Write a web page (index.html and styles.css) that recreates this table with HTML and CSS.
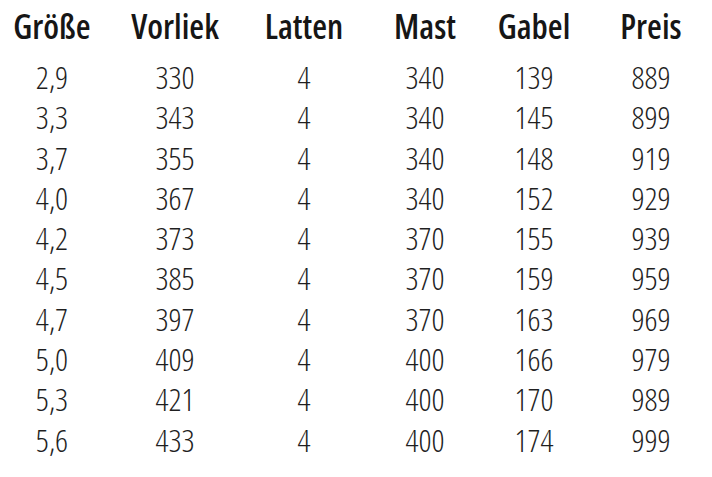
FILE: index.html
```html
<!DOCTYPE html>
<html lang="de">
<head>
<meta charset="utf-8">
<title>Preisliste</title>
<link rel="stylesheet" href="styles.css">
</head>
<body>
<div class="table">
  <div class="row head">
    <span>Größe</span><span>Vorliek</span><span>Latten</span><span>Mast</span><span>Gabel</span><span>Preis</span>
  </div>
  <div class="row"><span>2,9</span><span>330</span><span>4</span><span>340</span><span>139</span><span>889</span></div>
  <div class="row"><span>3,3</span><span>343</span><span>4</span><span>340</span><span>145</span><span>899</span></div>
  <div class="row"><span>3,7</span><span>355</span><span>4</span><span>340</span><span>148</span><span>919</span></div>
  <div class="row"><span>4,0</span><span>367</span><span>4</span><span>340</span><span>152</span><span>929</span></div>
  <div class="row"><span>4,2</span><span>373</span><span>4</span><span>370</span><span>155</span><span>939</span></div>
  <div class="row"><span>4,5</span><span>385</span><span>4</span><span>370</span><span>159</span><span>959</span></div>
  <div class="row"><span>4,7</span><span>397</span><span>4</span><span>370</span><span>163</span><span>969</span></div>
  <div class="row"><span>5,0</span><span>409</span><span>4</span><span>400</span><span>166</span><span>979</span></div>
  <div class="row"><span>5,3</span><span>421</span><span>4</span><span>400</span><span>170</span><span>989</span></div>
  <div class="row"><span>5,6</span><span>433</span><span>4</span><span>400</span><span>174</span><span>999</span></div>
</div>
</body>
</html>
```
FILE: styles.css
```css
html, body {
  margin: 0;
  padding: 0;
  background: #ffffff;
  overflow: hidden;
}

.table {
  padding-top: 6px;
  color: #1f1f1f;
  font-family: "Open Sans", "DejaVu Sans Condensed", sans-serif;
  font-stretch: 75%;
}

.row {
  display: grid;
  grid-template-columns: 104px 142px 116px 126px 92px 142px;
  width: 722px;
  height: 40.3px;
  line-height: 40px;
  font-size: 32px;
  font-weight: 300;
  text-align: center;
}

.row span {
  white-space: nowrap;
}

.row.head {
  height: 51px;
  font-size: 34px;
  font-weight: 600;
  color: #161616;
}
```
